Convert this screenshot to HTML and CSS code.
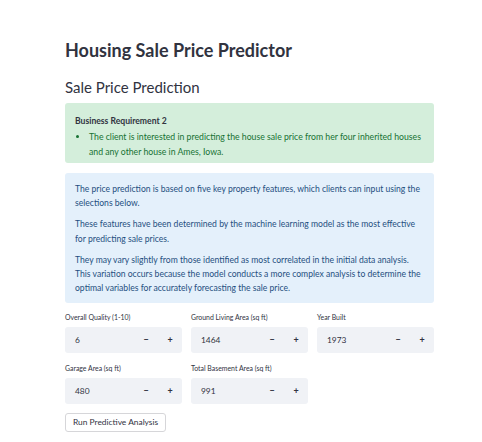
FILE: index.html
```html
<!DOCTYPE html>
<html>
<head>
<meta charset="utf-8">
<link rel="stylesheet" href="styles.css">
</head>
<body>
<main class="page">
  <h1 class="title">Housing Sale Price Predictor</h1>
  <h2 class="subtitle">Sale Price Prediction</h2>
  <div class="alert success">
    <p class="req-title">Business Requirement 2</p>
    <ul class="req-list">
      <li>The client is interested in predicting the house sale price from her four inherited houses and any other house in Ames, Iowa.</li>
    </ul>
  </div>
  <div class="alert info">
    <p>The price prediction is based on five key property features, which clients can input using the selections below.</p>
    <p>These features have been determined by the machine learning model as the most effective for predicting sale prices.</p>
    <p>They may vary slightly from those identified as most correlated in the initial data analysis. This variation occurs because the model conducts a more complex analysis to determine the optimal variables for accurately forecasting the sale price.</p>
  </div>
  <div class="grid">
    <div class="field">
      <label class="label">Overall Quality (1-10)</label>
      <div class="num"><span class="val">6</span><span class="btn">−</span><span class="btn">+</span></div>
    </div>
    <div class="field">
      <label class="label">Ground Living Area (sq ft)</label>
      <div class="num"><span class="val">1464</span><span class="btn">−</span><span class="btn">+</span></div>
    </div>
    <div class="field">
      <label class="label">Year Built</label>
      <div class="num"><span class="val">1973</span><span class="btn">−</span><span class="btn">+</span></div>
    </div>
    <div class="field">
      <label class="label">Garage Area (sq ft)</label>
      <div class="num"><span class="val">480</span><span class="btn">−</span><span class="btn">+</span></div>
    </div>
    <div class="field">
      <label class="label">Total Basement Area (sq ft)</label>
      <div class="num"><span class="val">991</span><span class="btn">−</span><span class="btn">+</span></div>
    </div>
  </div>
  <button class="run">Run Predictive Analysis</button>
</main>
</body>
</html>
```

FILE: styles.css
```css
html, body {
  margin: 0;
  padding: 0;
  background: #ffffff;
}
body {
  font-family: "Lato", "Open Sans", sans-serif;
  color: #31333f;
}
.page {
  width: 369px;
  margin: 0 0 0 65px;
  padding-top: 38px;
}
.title {
  margin: 0;
  font-size: 18px;
  font-weight: 700;
  line-height: 24px;
  color: #31333f;
}
.subtitle {
  margin: 15px 0 0 0;
  font-size: 15px;
  font-weight: 400;
  line-height: 20px;
  color: #31333f;
}
.alert {
  border-radius: 3px;
  font-size: 8.6px;
  box-sizing: border-box;
}
.success {
  margin-top: 6px;
  background: #d4eedb;
  color: #177233;
  height: 60px;
  padding: 11px 10px 0 10px;
  line-height: 15px;
}
.req-title {
  margin: 0;
  font-weight: 700;
  color: #31333f;
}
.req-list {
  margin: 0;
  padding: 0;
  list-style: none;
}
.req-list li {
  position: relative;
  padding-left: 14px;
  font-size: 8.7px;
}
.req-list li::before {
  content: "";
  position: absolute;
  left: 1px;
  top: 6px;
  width: 3px;
  height: 3px;
  border-radius: 50%;
  background: #177233;
}
.info {
  margin-top: 10px;
  background: #e4f0fb;
  color: #1f4f80;
  padding: 9px 10px 7px 10px;
  line-height: 14.3px;
}
.info p {
  margin: 0 0 6.8px 0;
}
.info p:last-child {
  margin-bottom: 0;
}
.grid {
  margin-top: 9px;
  display: grid;
  grid-template-columns: 1fr 1fr 1fr;
  column-gap: 9px;
  row-gap: 10px;
}
.label {
  display: block;
  font-size: 6.9px;
  line-height: 10px;
  height: 15px;
  color: #31333f;
}
.num {
  display: flex;
  align-items: center;
  height: 26px;
  background: #f0f2f6;
  border-radius: 3px;
  font-size: 8.4px;
}
.val {
  flex: 1;
  padding-left: 10px;
}
.btn {
  width: 24px;
  text-align: center;
  font-size: 9px;
  font-weight: 700;
}
.run {
  display: block;
  margin-top: 9px;
  font-family: inherit;
  font-size: 8.4px;
  color: #31333f;
  background: #ffffff;
  border: 1px solid #d6d6d9;
  border-radius: 3px;
  height: 19px;
  padding: 0 7px;
}
```
